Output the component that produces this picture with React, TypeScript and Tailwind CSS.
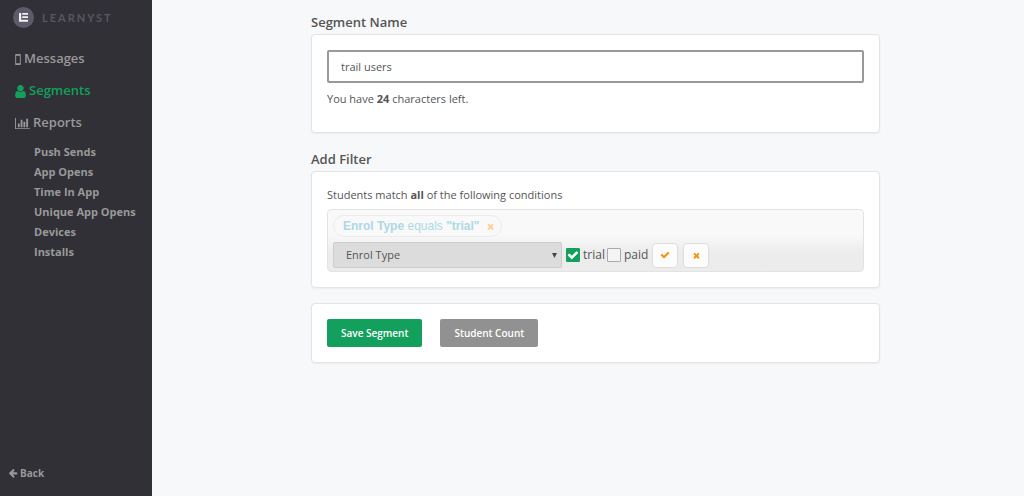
import { useState } from 'react';
import type { ReactNode } from 'react';

const REPORT_LINKS = ['Push Sends', 'App Opens', 'Time In App', 'Unique App Opens', 'Devices', 'Installs'];

const MAX_NAME_LENGTH = 35;

const ICONS = {
  user: 'M1536 1399q0 109-62.5 187t-150.5 78h-854q-88 0-150.5-78t-62.5-187q0-85 8.5-160.5t31.5-152 58.5-131 94-89 134.5-34.5q131 128 313 128t313-128q76 0 134.5 34.5t94 89 58.5 131 31.5 152 8.5 160.5zm-256-887q0 159-112.5 271.5t-271.5 112.5-271.5-112.5-112.5-271.5 112.5-271.5 271.5-112.5 271.5 112.5 112.5 271.5z',
  check: 'M1671 566q0 40-28 68l-724 724-136 136q-28 28-68 28t-68-28l-136-136-362-362q-28-28-28-68t28-68l136-136q28-28 68-28t68 28l294 295 656-657q28-28 68-28t68 28l136 136q28 28 28 68z',
  times: 'M1490 1322q0 40-28 68l-136 136q-28 28-68 28t-68-28l-294-294-294 294q-28 28-68 28t-68-28l-136-136q-28-28-28-68t28-68l294-294-294-294q-28-28-28-68t28-68l136-136q28-28 68-28t68 28l294 294 294-294q28-28 68-28t68 28l136 136q28 28 28 68t-28 68l-294 294 294 294q28 28 28 68z',
  chart: 'M640 896v512h-256v-512h256zm384-512v1024h-256v-1024h256zm1024 1152v128h-2048v-1536h128v1408h1920zm-640-896v768h-256v-768h256zm384-384v1152h-256v-1152h256z',
  arrowLeft: 'M1664 896v128q0 53-32.5 90.5t-84.5 37.5h-704l293 294q38 36 38 90t-38 90l-75 76q-37 37-90 37-52 0-91-37l-651-652q-37-37-37-90 0-52 37-91l651-650q38-38 91-38 52 0 90 38l75 74q38 38 38 91t-38 91l-293 293h704q52 0 84.5 37.5t32.5 90.5z',
  mobile: 'M256 128h640q64 0 64 64v1408q0 64-64 64h-640q-64 0-64-64v-1408q0-64 64-64zm64 256v1024h512v-1024z',
};

function Icon({ d, viewBox = '0 0 1792 1792', className }: { d: string; viewBox?: string; className: string }) {
  return (
    <svg viewBox={viewBox} className={className} fill="currentColor" fillRule="evenodd" aria-hidden>
      <path d={d} />
    </svg>
  );
}

function Logo() {
  return (
    <a href="#home" className="flex items-center gap-2 pl-[13px] text-[#575760]">
      <svg viewBox="0 0 21 21" className="size-[21px]" aria-hidden>
        <circle cx="10.5" cy="10.5" r="10.5" fill="#5c5b67" />
        <path
          d="M6 6h2.2v6.7h6.8v2h-9zM9.2 6h5.8v1.8h-5.8zM9.2 9.3h5.8v1.8h-5.8z"
          fill="#f2f2f4"
        />
      </svg>
      <span className="font-[Lato] text-[11px] leading-5 font-bold tracking-[2px]">LEARNYST</span>
    </a>
  );
}

function Sidebar() {
  return (
    <aside className="flex w-[152px] shrink-0 flex-col bg-[#303036] pt-[7px] pb-[13px] font-semibold text-[#999]">
      <Logo />
      <nav className="mt-[15px] flex-1 pl-[15px] text-[13px]">
        <a href="#messages" className="flex h-8 items-center gap-[3px]">
          <Icon d={ICONS.mobile} viewBox="192 0 768 1792" className="h-[13px] w-[6px]" />
          Messages
        </a>
        <a href="#segments" className="flex h-8 items-center gap-[3px] text-[#12a05c]">
          <Icon d={ICONS.user} viewBox="256 0 1280 1792" className="h-[15px] w-[11px]" />
          Segments
        </a>
        <a href="#reports" className="flex h-8 items-center gap-[3px]">
          <Icon d={ICONS.chart} viewBox="0 0 2048 1792" className="h-[13px] w-[15px]" />
          Reports
        </a>
        <ul className="mt-[3px] pl-[19px] text-[11px] leading-5 font-bold">
          {REPORT_LINKS.map((label) => (
            <li key={label}>
              <a href="#reports">{label}</a>
            </li>
          ))}
        </ul>
      </nav>
      <a href="#back" className="flex items-center gap-[2px] pl-2 text-[10px] leading-5 font-bold">
        <Icon d={ICONS.arrowLeft} className="size-[10px]" />
        Back
      </a>
    </aside>
  );
}

function Card({ children, className }: { children: ReactNode; className: string }) {
  return (
    <div className={`rounded-sm border border-[#e3e4e6] bg-white px-[15px] shadow-xs ${className}`}>{children}</div>
  );
}

function CheckOption({ label, checked, onChange }: { label: string; checked: boolean; onChange: () => void }) {
  return (
    <label className="flex items-center gap-[3px] text-[12px]">
      <span className="grid size-[14px] place-items-center">
        <input
          type="checkbox"
          checked={checked}
          onChange={onChange}
          className="col-start-1 row-start-1 size-[14px] appearance-none rounded-[1px] border border-[#aaa] bg-[#f4f4f4] checked:border-[#12a05c] checked:bg-[#12a05c]"
        />
        {checked ? (
          <Icon d={ICONS.check} className="pointer-events-none col-start-1 row-start-1 size-[12px] text-white" />
        ) : null}
      </span>
      {label}
    </label>
  );
}

const ICON_BUTTON =
  'flex h-[25px] w-[26px] items-center justify-center rounded-sm border border-[#ddd] bg-[#fcfcfc] text-[#f7900f]';

export default function App() {
  const [name, setName] = useState('trail users');
  const [types, setTypes] = useState({ trial: true, paid: false });

  return (
    <div className="flex min-h-screen bg-[#f7f8fa] font-['Open_Sans',sans-serif] text-[#555]">
      <Sidebar />
      <main className="min-w-0 flex-1 pt-3 pr-[144px] pl-[159px]">
        <label htmlFor="segment-name" className="block h-[22px] text-[13px] leading-5 font-semibold">
          Segment Name
        </label>
        <Card className="pt-[15px] pb-[23px]">
          <input
            id="segment-name"
            value={name}
            maxLength={MAX_NAME_LENGTH}
            onChange={(e) => setName(e.target.value)}
            className="block h-[33px] w-full rounded-xs border-2 border-[#999] bg-white px-3 text-[11px]"
          />
          <p className="mt-[6px] text-[11px] leading-5">
            You have <b>{MAX_NAME_LENGTH - name.length}</b> characters left.
          </p>
        </Card>

        <h2 className="mt-4 h-[22px] text-[13px] leading-5 font-semibold">Add Filter</h2>
        <Card className="pt-[13px] pb-[15px]">
          <p className="text-[11px] leading-5">
            Students match <b>all</b> of the following conditions
          </p>
          <div className="mt-1 rounded-sm border border-[#e3e3e3] bg-linear-to-b from-[#f9f9f9] from-40% to-[#ececec] to-70% px-[5px] pt-[5px] pb-[3px]">
            <div className="flex">
              <div className="flex h-[22px] items-center rounded-full border border-[#ebebeb] pr-[6px] pl-[9px] font-['Liberation_Sans',sans-serif] text-[12px] text-[#add8e6]">
                <span>
                  <b>Enrol Type</b> equals <b>"trial"</b>
                </span>
                <button type="button" aria-label="Remove condition" className="ml-[6px] text-[#fbcf96]">
                  <Icon d={ICONS.times} className="size-[9px]" />
                </button>
              </div>
            </div>
            <div className="mt-[5px] flex items-center gap-1">
              <div className="grid w-[229px] items-center">
                <select
                  aria-label="Filter field"
                  className="col-start-1 row-start-1 h-[26px] w-full appearance-none rounded-xs border border-[#ccc] bg-[#dcdcdc] px-3 text-[11px]"
                >
                  <option>Enrol Type</option>
                  <option>Device</option>
                </select>
                <svg
                  viewBox="0 0 5 5"
                  className="pointer-events-none col-start-1 row-start-1 mr-[5px] size-[5px] justify-self-end"
                  aria-hidden
                >
                  <path d="M0 0h5l-2.5 5z" fill="#444" />
                </svg>
              </div>
              <div className="flex gap-[2px]">
                <CheckOption
                  label="trial"
                  checked={types.trial}
                  onChange={() => setTypes({ ...types, trial: !types.trial })}
                />
                <CheckOption
                  label="paid"
                  checked={types.paid}
                  onChange={() => setTypes({ ...types, paid: !types.paid })}
                />
              </div>
              <div className="flex gap-[5px]">
                <button type="button" aria-label="Apply filter" className={ICON_BUTTON}>
                  <Icon d={ICONS.check} className="size-[10px]" />
                </button>
                <button type="button" aria-label="Cancel filter" className={ICON_BUTTON}>
                  <Icon d={ICONS.times} className="size-[9px]" />
                </button>
              </div>
            </div>
          </div>
        </Card>

        <Card className="mt-[15px] flex gap-[18px] py-[15px] text-[10px] font-semibold text-white">
          <button type="button" className="h-7 rounded-xs bg-[#12a05c] px-[14px]">
            Save Segment
          </button>
          <button type="button" className="h-7 rounded-xs bg-[#919191] px-[14px]">
            Student Count
          </button>
        </Card>
      </main>
    </div>
  );
}
